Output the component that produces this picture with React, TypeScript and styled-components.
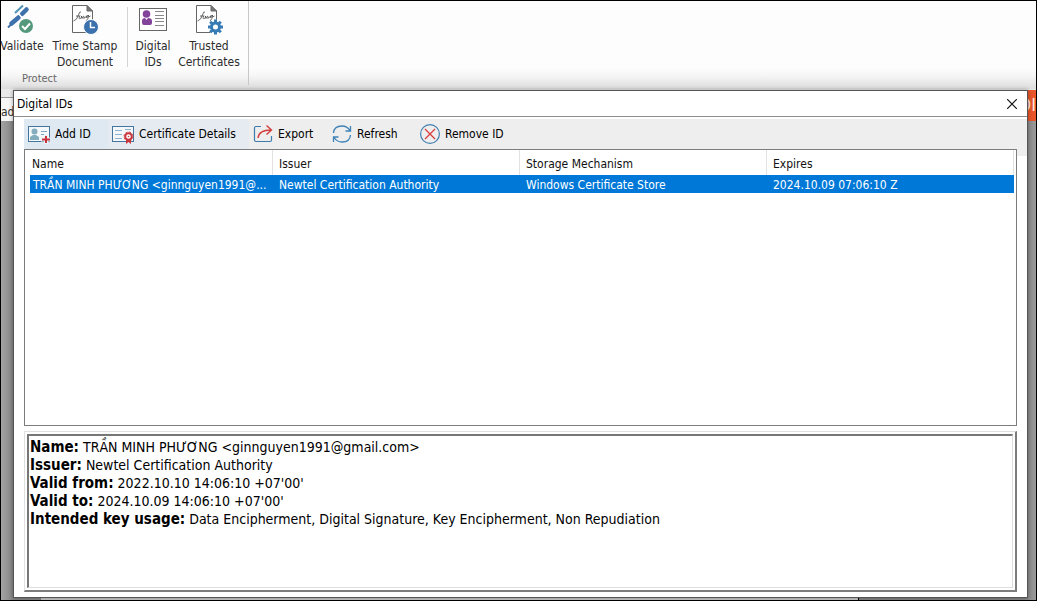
import React from "react";
import styled, { createGlobalStyle } from "styled-components";

const uiFont = `"DejaVu Sans Condensed", "Noto Sans", Tahoma, sans-serif`;

const GlobalStyle = createGlobalStyle`
  *, *::before, *::after { box-sizing: border-box; }
  body { margin: 0; background: #8c8c8c; }
  button { font: inherit; color: inherit; border: 0; background: none; padding: 0; margin: 0; cursor: default; }
`;

const Screen = styled.div`
  position: relative;
  display: flex;
  flex-direction: column;
  min-height: 100vh;
  overflow: hidden;
  border: 1px solid #000;
  background: #909090;
  color: #111;
  font: 12px/16px ${uiFont};
`;

const Ribbon = styled.header`
  display: flex;
  height: 88px;
  padding-bottom: 4px;
  background: linear-gradient(#fdfdfd 75%, #f6f6f6 85%, #dcdcdc);
`;

const RibbonGroup = styled.section`
  display: flex;
  flex-direction: column;
  width: 248px;
  border-right: 1px solid #c8c8c8;
`;

const RibbonTools = styled.div`
  display: flex;
  flex: none;
  height: 71px;
`;

const RibbonButton = styled.button<{ $width: number }>`
  display: flex;
  flex: none;
  flex-direction: column;
  align-items: center;
  justify-content: flex-start;
  gap: 3px;
  width: ${(p) => p.$width}px;
  padding-top: 2px;
  color: #2d2d2d;
  white-space: nowrap;
`;

const RibbonDivider = styled.span`
  width: 1px;
  height: 60px;
  margin-top: 6px;
  background: #d4d4d4;
`;

const RibbonCaption = styled.div`
  padding-left: 21px;
  color: #666;
  font-size: 11px;
  line-height: 14px;
`;

const DocumentBar = styled.div`
  display: flex;
  justify-content: space-between;
  height: 32px;
  padding-top: 1px;
  background: #e9e9e9;
`;

const DocumentTab = styled.div`
  width: 120px;
  margin-top: 7px;
  padding-top: 6px;
  border-top: 1px solid #999;
  background: #f7f7f7;
  color: #333;
`;

const Banner = styled.div`
  width: 77px;
  overflow: hidden;
  background: #e8562a;
  color: #ffe2d8;
  font-size: 18px;
  line-height: 30px;
  text-align: right;
  white-space: nowrap;
`;

const Canvas = styled.main`
  display: flex;
  flex: 1;
  align-items: flex-end;
  background: linear-gradient(90deg, #a4a4a4, #858585 12px, #858585 99%, #9a9a9a);
`;

const Page = styled.div`
  width: 79%;
  height: 3px;
  margin-left: 40px;
  border-right: 1px solid #000;
  background: #c9c9c9;
`;

const Dialog = styled.section`
  position: absolute;
  top: 89px;
  right: 8px;
  bottom: 2px;
  left: 12px;
  display: flex;
  flex-direction: column;
  border: 1px solid #555;
  background: #fff;
  box-shadow: 0 0 4px rgba(0, 0, 0, 0.35);
`;

const TitleBar = styled.div`
  display: flex;
  flex: none;
  align-items: center;
  justify-content: space-between;
  height: 26px;
  padding: 0 10px 0 3px;
  border-bottom: 1px solid #8f8f8f;
`;

const Title = styled.h1`
  margin: 0;
  font: inherit;
  color: #000;
`;

const CloseButton = styled.button`
  display: flex;
`;

const Workspace = styled.div`
  display: flex;
  flex: 1;
  flex-direction: column;
  margin: 2px 0 0 10px;
  padding: 0 10px 5px 0;
  background: linear-gradient(#eee 37px, #fff 37px);
`;

const Toolbar = styled.div`
  display: flex;
  flex: none;
  height: 30px;
`;

const ToolButton = styled.button<{ $width: number; $tint?: string }>`
  display: flex;
  flex: none;
  align-items: center;
  gap: 5px;
  width: ${(p) => p.$width}px;
  padding-left: 4px;
  background: ${(p) => p.$tint ?? "transparent"};
  color: #000;
  white-space: nowrap;
`;

const ListBox = styled.div`
  flex: 1;
  border: 1px solid #7d7d7d;
  padding: 0 2px 0 5px;
  background: #fff;
`;

const IdTable = styled.table`
  width: 100%;
  table-layout: fixed;
  border-collapse: separate;
  border-spacing: 0;
`;

const Column = styled.col<{ $width?: number }>`
  width: ${(p) => (p.$width ? `${p.$width}px` : "auto")};
`;

const HeadCell = styled.th<{ $first?: boolean }>`
  height: 25px;
  padding: 2px 0 0 ${(p) => (p.$first ? 2 : 6)}px;
  border-right: 1px solid #e2e2e2;
  color: #111;
  font-weight: normal;
  text-align: left;
`;

const SelectedRow = styled.tr`
  background: #0078d7;
  color: #fff;
`;

const Cell = styled.td<{ $first?: boolean }>`
  height: 18px;
  padding: 1px 0 0 ${(p) => (p.$first ? 3 : 6)}px;
  overflow: hidden;
  white-space: nowrap;
`;

const DetailFrame = styled.section`
  flex: none;
  height: 166px;
  padding: 5px 0 0;
  background: #fff;
`;

const DetailBorder = styled.div`
  height: 100%;
  padding: 2px;
  border-style: solid;
  border-width: 1px 2px 2px 1px;
  border-color: #e0e0e0 #7d7d7d #7d7d7d #e0e0e0;
`;

const Details = styled.dl`
  height: 100%;
  margin: 0;
  padding: 2px 1px;
  border-style: solid;
  border-width: 2px 1px 1px 2px;
  border-color: #777 #dedede #dedede #777;
  color: #000;
  font-size: 14px;
  line-height: 18px;
`;

const DetailLine = styled.div`
  display: flex;
  align-items: baseline;
  gap: 4px;
  height: 18px;
`;

const Term = styled.dt`
  font-size: 15px;
  font-weight: bold;
`;

const Value = styled.dd`
  margin: 0;
`;

const Signed = () => (
  <>
    <path d="M3.500 2.500H18L23.500 8V29.500H3.500Z" fill="#fff" stroke="#666" />
    <path d="M18 2.500V8H23.500Z" fill="#777" stroke="#666" />
    <path d="M4.500 18Q8 17 9.500 12Q10.500 8 12 9M7 13H10.500M11 12.500Q9 16.500 11.500 15.500Q13 14 12.500 13Q13 15 13 15.500Q15 12 15 13.500L15 15.500Q17 13 18.500 12.500Q16 14.500 17.500 15Q19 14 19.500 12Q19.500 16 17 18M19.500 14L21.500 13" fill="none" stroke="#444" strokeWidth=".8" />
  </>
);

const ValidateIcon = () => (
  <svg width="32" height="32" viewBox="0 0 32 32" aria-hidden="true">
    <path d="M5.500 20.500L12.500 14.500M16 11L20.500 6.500" stroke="#3f71ad" strokeWidth="4.500" strokeLinecap="round" fill="none" />
    <path d="M2 24.500L6 20.500" stroke="#3f71ad" strokeWidth="2" />
    <path d="M9 10L17 2.500" stroke="#4f93b5" strokeWidth="2" fill="none" />
    <path d="M12.500 10.500L16.500 15" stroke="#fff" strokeWidth="1.200" />
    <circle cx="20" cy="23" r="7" fill="#55997c" />
    <path d="M16 23L19 26L24 20.500" fill="none" stroke="#fff" strokeWidth="2" />
  </svg>
);

const StampIcon = () => (
  <svg width="32" height="32" viewBox="0 0 32 32" aria-hidden="true">
    <Signed />
    <circle cx="22" cy="24" r="7.500" fill="#3b72ad" stroke="#fff" />
    <path d="M21.500 19V24.500H26" fill="none" stroke="#fff" strokeWidth="1.500" />
  </svg>
);

const CardIcon = () => (
  <svg width="32" height="32" viewBox="0 0 32 32" aria-hidden="true">
    <rect x="2.500" y="5.500" width="27" height="22" fill="#fff" stroke="#666" />
    <circle cx="9.500" cy="11" r="3.800" fill="#83439a" />
    <path d="M5 20V18Q5 15 8 15L9.500 17L11 15Q15 15 15 18V20Q15 22 13 22H7Q5 22 5 20Z" fill="#83439a" />
    <path d="M18 8.500H27M18 12.500H27M18 15.500H27M18 18.500H27M18 22.500H27" stroke="#888" />
  </svg>
);

const gearTeeth = [0, 45, 90, 135, 180, 225, 270, 315];

const TrustedIcon = () => (
  <svg width="32" height="32" viewBox="0 0 32 32" aria-hidden="true">
    <Signed />
    <circle cx="22.500" cy="24" r="7.500" fill="#fff" />
    {gearTeeth.map((a) => (
      <rect key={a} x="21" y="16.500" width="3" height="4" fill="#377bb5" transform={`rotate(${a} 22.500 24)`} />
    ))}
    <circle cx="22.500" cy="24" r="4" fill="#fff" stroke="#377bb5" strokeWidth="3" />
  </svg>
);

const AddIcon = () => (
  <svg width="22" height="20" viewBox="0 0 22 20" aria-hidden="true">
    <rect x=".5" y="2.500" width="21" height="15" fill="#f5f9fb" stroke="#44759f" />
    <circle cx="6.500" cy="7.500" r="3" fill="#84adbd" />
    <path d="M2 16V13L5 11H8L11 13V16Z" fill="#84adbd" />
    <path d="M13 7.500H19M13 10.500H16" stroke="#78a8c5" />
    <path d="M18 10V20M13 15.500H22" stroke="#edf4f8" strokeWidth="4" />
    <path d="M18 12V19M14 15.500H22" stroke="#c8323c" strokeWidth="2" />
  </svg>
);

const CertificateIcon = () => (
  <svg width="22" height="20" viewBox="0 0 22 20" aria-hidden="true">
    <rect x=".5" y="2.500" width="21" height="15" fill="#f3f7fa" stroke="#44759f" />
    <path d="M3 6.500H10M3 10.500H10M3 14.500H10M13 5.500H19" stroke="#8bb1ce" />
    <path d="M14 16V20L16.500 18L19 20V16" fill="#c9373c" />
    <circle cx="16.500" cy="12.500" r="3.300" fill="#fff" stroke="#c9373c" strokeWidth="2" />
    <circle cx="16.500" cy="12.500" r="4.500" fill="none" stroke="#c9373c" strokeWidth="1" strokeDasharray="2 1.500" />
    <circle cx="16.500" cy="12.500" r=".8" fill="#c9373c" />
  </svg>
);

const ExportIcon = () => (
  <svg width="20" height="20" viewBox="0 0 20 20" fill="none" aria-hidden="true">
    <path d="M8 2.500H3Q1.500 2.500 1.500 4V16Q1.500 17.500 3 17.500H17Q18.500 17.500 18.500 16V12" stroke="#3f7cae" strokeWidth="1.200" />
    <path d="M5 14Q6 6 18 6M13.500 1.500L18.500 6L13.500 10.500" stroke="#d33c3c" strokeWidth="1.400" />
  </svg>
);

const RefreshIcon = () => (
  <svg width="20" height="20" viewBox="0 0 20 20" fill="none" stroke="#3d82b8" strokeWidth="1.300" aria-hidden="true">
    <path d="M1.500 9Q2 2 10 2Q15 2 18 6.500M18.500 2V7H13.500M18.500 11Q18 18 10 18Q5 18 2 13.500M1.500 18V13H6.500" />
  </svg>
);

const RemoveIcon = () => (
  <svg width="20" height="20" viewBox="0 0 20 20" fill="none" aria-hidden="true">
    <circle cx="10" cy="10" r="9.400" stroke="#4481b2" strokeWidth="1.200" />
    <path d="M5 5L15 15M15 5L5 15" stroke="#dc3e40" strokeWidth="1.300" />
  </svg>
);

const details = [
  ["Name:", "TRẦN MINH PHƯƠNG <ginnguyen1991@gmail.com>"],
  ["Issuer:", "Newtel Certification Authority"],
  ["Valid from:", "2022.10.10 14:06:10 +07'00'"],
  ["Valid to:", "2024.10.09 14:06:10 +07'00'"],
  ["Intended key usage:", "Data Encipherment, Digital Signature, Key Encipherment, Non Repudiation"],
];

export default function App() {
  return (
    <>
      <GlobalStyle />
      <Screen>
        <Ribbon>
          <RibbonGroup>
            <RibbonTools>
              <RibbonButton $width={42}><ValidateIcon /><span>Validate</span></RibbonButton>
              <RibbonButton $width={84}><StampIcon /><span>Time Stamp<br />Document</span></RibbonButton>
              <RibbonDivider />
              <RibbonButton $width={50}><CardIcon /><span>Digital<br />IDs</span></RibbonButton>
              <RibbonButton $width={62}><TrustedIcon /><span>Trusted<br />Certificates</span></RibbonButton>
            </RibbonTools>
            <RibbonCaption>Protect</RibbonCaption>
          </RibbonGroup>
        </Ribbon>
        <DocumentBar>
          <DocumentTab>ad</DocumentTab>
          <Banner>DI</Banner>
        </DocumentBar>
        <Canvas><Page /></Canvas>

        <Dialog role="dialog" aria-labelledby="dialog-title">
          <TitleBar>
            <Title id="dialog-title">Digital IDs</Title>
            <CloseButton aria-label="Close">
              <svg width="10" height="10" viewBox="0 0 10 10" aria-hidden="true">
                <path d="M0 0L10 10M10 0L0 10" stroke="#111" strokeWidth="1.200" />
              </svg>
            </CloseButton>
          </TitleBar>
          <Workspace>
            <Toolbar role="toolbar">
              <ToolButton $width={84} $tint="#dfe9f2"><AddIcon />Add ID</ToolButton>
              <ToolButton $width={141} $tint="#e6ebf1"><CertificateIcon />Certificate Details</ToolButton>
              <ToolButton $width={79}><ExportIcon />Export</ToolButton>
              <ToolButton $width={88}><RefreshIcon />Refresh</ToolButton>
              <ToolButton $width={100}><RemoveIcon />Remove ID</ToolButton>
            </Toolbar>
            <ListBox>
              <IdTable>
                <colgroup>
                  <Column $width={243} /><Column $width={247} /><Column $width={247} /><Column />
                </colgroup>
                <thead>
                  <tr>
                    <HeadCell $first>Name</HeadCell>
                    <HeadCell>Issuer</HeadCell>
                    <HeadCell>Storage Mechanism</HeadCell>
                    <HeadCell>Expires</HeadCell>
                  </tr>
                </thead>
                <tbody>
                  <SelectedRow>
                    <Cell $first>TRẦN MINH PHƯƠNG &lt;ginnguyen1991@...</Cell>
                    <Cell>Newtel Certification Authority</Cell>
                    <Cell>Windows Certificate Store</Cell>
                    <Cell>2024.10.09 07:06:10 Z</Cell>
                  </SelectedRow>
                </tbody>
              </IdTable>
            </ListBox>
            <DetailFrame>
              <DetailBorder>
                <Details>
                  {details.map(([term, value]) => (
                    <DetailLine key={term}><Term>{term}</Term><Value>{value}</Value></DetailLine>
                  ))}
                </Details>
              </DetailBorder>
            </DetailFrame>
          </Workspace>
        </Dialog>
      </Screen>
    </>
  );
}
